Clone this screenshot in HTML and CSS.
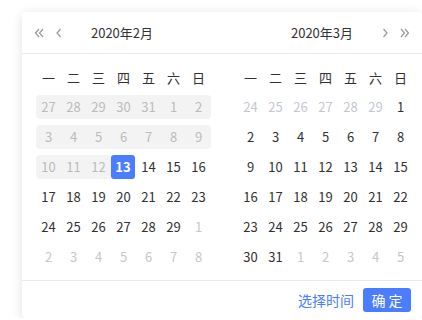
FILE: index.html
```html
<!DOCTYPE html>
<html lang="zh-CN">
<head>
    <meta charset="UTF-8">
    <meta name="viewport" content="width=device-width, initial-scale=1.0">
    <title>日期范围选择</title>
    <link rel="stylesheet" href="styles.css">
</head>
<body>
    <div class="picker">
        <!-- Month headers -->
        <div class="picker-header">
            <div class="month-head">
                <div class="arrows">
                    <span class="arrow"><svg width="10" height="10" viewBox="0 0 10 10"><polyline points="5,1 1.5,5 5,9" /><polyline points="9,1 5.5,5 9,9" /></svg></span>
                    <span class="arrow"><svg width="10" height="10" viewBox="0 0 10 10"><polyline points="6.5,1 3,5 6.5,9" /></svg></span>
                </div>
                <div class="title">2020年2月</div>
                <div class="arrows"></div>
            </div>
            <div class="month-head">
                <div class="arrows"></div>
                <div class="title">2020年3月</div>
                <div class="arrows">
                    <span class="arrow"><svg width="10" height="10" viewBox="0 0 10 10"><polyline points="3.5,1 7,5 3.5,9" /></svg></span>
                    <span class="arrow"><svg width="10" height="10" viewBox="0 0 10 10"><polyline points="1,1 4.5,5 1,9" /><polyline points="5,1 8.5,5 5,9" /></svg></span>
                </div>
            </div>
        </div>

        <div class="picker-body">
            <!-- February -->
            <div class="month">
                <div class="weekdays">
                    <span>一</span><span>二</span><span>三</span><span>四</span><span>五</span><span>六</span><span>日</span>
                </div>
                <div class="days">
                    <span class="range row-start">27</span><span class="range">28</span><span class="range">29</span><span class="range">30</span><span class="range">31</span><span class="range">1</span><span class="range row-end">2</span>
                    <span class="range row-start">3</span><span class="range">4</span><span class="range">5</span><span class="range">6</span><span class="range">7</span><span class="range">8</span><span class="range row-end">9</span>
                    <span class="range row-start">10</span><span class="range">11</span><span class="range">12</span><span class="selected">13</span><span>14</span><span>15</span><span>16</span>
                    <span>17</span><span>18</span><span>19</span><span>20</span><span>21</span><span>22</span><span>23</span>
                    <span>24</span><span>25</span><span>26</span><span>27</span><span>28</span><span>29</span><span class="other">1</span>
                    <span class="other">2</span><span class="other">3</span><span class="other">4</span><span class="other">5</span><span class="other">6</span><span class="other">7</span><span class="other">8</span>
                </div>
            </div>

            <!-- March -->
            <div class="month">
                <div class="weekdays">
                    <span>一</span><span>二</span><span>三</span><span>四</span><span>五</span><span>六</span><span>日</span>
                </div>
                <div class="days">
                    <span class="other">24</span><span class="other">25</span><span class="other">26</span><span class="other">27</span><span class="other">28</span><span class="other">29</span><span>1</span>
                    <span>2</span><span>3</span><span>4</span><span>5</span><span>6</span><span>7</span><span>8</span>
                    <span>9</span><span>10</span><span>11</span><span>12</span><span>13</span><span>14</span><span>15</span>
                    <span>16</span><span>17</span><span>18</span><span>19</span><span>20</span><span>21</span><span>22</span>
                    <span>23</span><span>24</span><span>25</span><span>26</span><span>27</span><span>28</span><span>29</span>
                    <span>30</span><span>31</span><span class="other">1</span><span class="other">2</span><span class="other">3</span><span class="other">4</span><span class="other">5</span>
                </div>
            </div>
        </div>

        <div class="picker-footer">
            <a href="#" class="time-link">选择时间</a>
            <button type="button" class="ok-btn">确 定</button>
        </div>
    </div>
</body>
</html>
```

FILE: styles.css
```css
body {
    margin: 0;
    background-color: #fff;
    font-family: "Noto Sans CJK SC", "Noto Sans", sans-serif;
    color: #303133;
    overflow: hidden;
}
.picker {
    margin: 12px 0 0 22px;
    width: 400px;
    height: 306px;
    background-color: #fff;
    border-radius: 4px;
    box-shadow: 0 2px 12px rgba(0, 0, 0, 0.12);
    display: flex;
    flex-direction: column;
}
.picker-header {
    display: flex;
    height: 41px;
    border-bottom: 1px solid #ebebeb;
}
.month-head {
    flex: 1;
    display: flex;
    align-items: center;
    padding: 0 7px;
}
.arrows {
    width: 40px;
    display: flex;
}
.arrow {
    width: 20px;
    height: 20px;
    display: flex;
    align-items: center;
    justify-content: center;
    cursor: pointer;
}
.arrow svg {
    fill: none;
    stroke: #999;
    stroke-width: 1.2;
}
.title {
    flex: 1;
    text-align: center;
    font-size: 13px;
}
.picker-body {
    display: flex;
    padding-top: 10px;
}
.month {
    flex: 1;
    padding: 0 13px 0 14px;
}
.weekdays,
.days {
    display: grid;
    grid-template-columns: repeat(7, 25px);
}
.weekdays span {
    height: 28px;
    line-height: 28px;
    text-align: center;
    font-size: 13px;
}
.days {
    padding-top: 3px;
    row-gap: 6px;
}
.days span {
    height: 24px;
    line-height: 24px;
    text-align: center;
    font-size: 13px;
}
.days .range {
    background-color: #f3f3f3;
    color: #bbb;
}
.days .row-start {
    border-radius: 4px 0 0 4px;
}
.days .row-end {
    border-radius: 0 4px 4px 0;
}
.days .selected {
    background-color: #4a7dff;
    color: #fff;
    font-weight: bold;
    border-radius: 3px;
    margin-right: 1px;
}
.days .other {
    color: #c4c7cf;
}
.picker-footer {
    margin-top: auto;
    height: 37px;
    border-top: 1px solid #ebebeb;
    display: flex;
    align-items: center;
    justify-content: flex-end;
    padding-right: 11px;
    gap: 9px;
}
.time-link {
    color: #4a7dff;
    font-size: 14px;
    text-decoration: none;
}
.ok-btn {
    width: 48px;
    height: 24px;
    padding: 0;
    border: none;
    border-radius: 3px;
    background-color: #4a7dff;
    color: #fff;
    font-family: inherit;
    font-size: 14px;
    cursor: pointer;
}
```
